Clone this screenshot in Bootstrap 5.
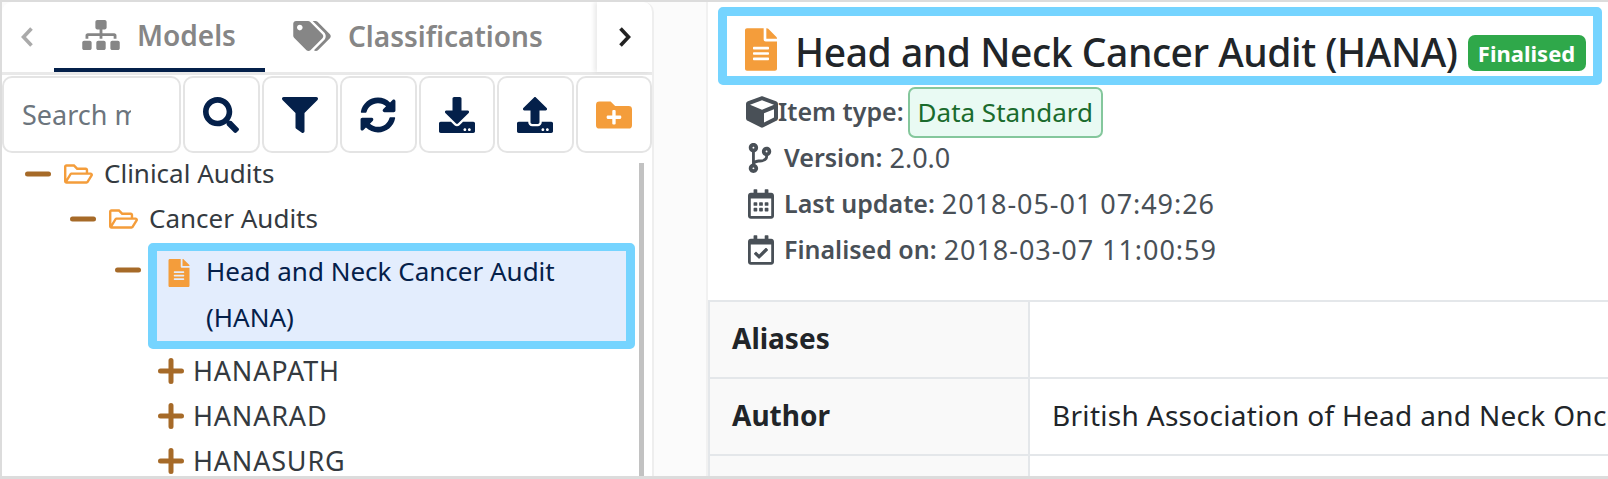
<!DOCTYPE html>
<html lang="en">
  <head>
    <meta charset="UTF-8" />
    <title>Head and Neck Cancer Audit (HANA)</title>
    <link href="https://cdn.jsdelivr.net/npm/bootstrap@5.3.3/dist/css/bootstrap.min.css" rel="stylesheet" />
    <style>
      html, body { height: 479px; margin: 0; overflow: hidden; }
      body { font-family: "Noto Sans", "Lato", sans-serif; background: #fff; }
      .shot { height: 479px; background: #fbfbfb; border: solid #dcdcdc; border-width: 2px 0 3px 2px; overflow: hidden; }
      .ico { fill: currentColor; display: block; flex: none; }

      .side { width: 652px; flex: none; background: #fff; border-right: 2px solid #eee; border-radius: 10px 10px 0 0; }
      .tabbar { height: 70px; border-bottom: 3px solid #e9e9e9; box-sizing: content-box; }
      .tab-prev { width: 52px; color: #aaa; padding-left: 18px; }
      .tab-item { height: 70px; color: #868686; font-size: 28px; font-weight: 600; gap: 17px; padding: 0 28px 2px; }
      .tab-item.on { border-bottom: 4px solid #04204a; width: 211px; padding-bottom: 0; }
      .tab-next { width: 55px; color: #222; box-shadow: -3px 0 4px rgba(0, 0, 0, .08); padding-left: 21px; }
      .tools { height: 77px; margin-top: 1px; gap: 2px; }
      .find { width: 179px; height: 77px; border: 2px solid #e4e4e4; border-radius: 10px; font-size: 27px; color: #6c757d; padding: 0 48px 0 18px; outline: 0; font-family: inherit; }
      .find::placeholder { color: #6c757d; opacity: 1; }
      .tool { flex: 1; height: 77px; border: 2px solid #e4e4e4; border-radius: 10px; color: #04204a; background: #fff; padding: 0; }

      .treebox { margin-top: -2px; min-height: 0; }
      .tree-list { list-style: none; margin: 0; padding: 0 0 0 45px; }
      .tree { padding-left: 23px; font-size: 26px; line-height: 45px; color: #343a40; width: 634px; flex: none; }
      .tree-row { height: 45px; white-space: nowrap; }
      .toggle { color: #a66a28; margin-right: 13px; }
      .toggle-sel { margin-right: 7px; }
      .leaf { padding-left: 43px; font-size: 27px; letter-spacing: .8px; }
      .leaf .toggle { margin-right: 9px; }
      .folder { color: #f49d3b; margin-right: 11px; }
      .picked { margin: 2px 0 -1px 0; width: 487px; height: 106px; flex: none; border: solid #75d4ff; border-width: 8px 9px; border-radius: 5px; background: #e3edfd; color: #04204a; line-height: 46px; padding: 0 0 0 11px; }
      .picked-text { margin: -3px 0 0 5px; white-space: normal; }
      .scroller { width: 5px; background: #c2c2c2; margin: 12px 0 0 3px; flex: none; }

      .main { margin-left: 52px; min-width: 0; background: #fff; border-left: 2px solid #f1f1f1; }
      .head-box { margin: 5px 6px 0 10px; height: 78px; border: solid #75d4ff; border-width: 9px; border-radius: 5px; padding: 12px 16px 0 18px; }
      .head-box h1 { font-size: 39px; letter-spacing: -.45px; font-weight: 500; color: #212529; margin: 0 10px 0 18px; white-space: nowrap; }
      .head-ico { color: #f49d3b; margin-bottom: 5px; }
      .state { background: #2fa84a; font-size: 22px; font-weight: 700; padding: 0; width: 118px; height: 36px; line-height: 36px; border-radius: 7px; flex: none; margin-top: 2px; }
      .facts { padding-left: 38px; margin-top: 1px; font-size: 27px; color: #495057; height: 214px; }
      .fact { height: 46px; white-space: nowrap; }
      .fact-top { height: 52px; margin-bottom: -3px; }
      .fact b { font-size: 25px; font-weight: 600; }
      .fact-ico { width: 38px; padding-left: 2px; }
      .stamp { letter-spacing: .95px; }
      .type-tag { height: 51px; line-height: 47px; padding: 0 8px; margin-left: 4px; background: #e9faf3; border: 2px solid #84c79c; border-radius: 7px; color: #1a6b2d; font-size: 26px; }
      .props { font-size: 28px; color: #212529; border-collapse: collapse; margin: 0; width: 1200px; }
      .props th, .props td { height: 77px; padding: 0 22px 3px; border: 2px solid #e4e7ea; vertical-align: middle; white-space: nowrap; }
      .props td { letter-spacing: .3px; }
      .props th { width: 320px; background: #f9f9f9; font-weight: 700; }
    </style>
  </head>
  <body>
    <svg width="0" height="0" class="position-absolute">
      <symbol id="i-sitemap" viewBox="0 0 640 512"><path d="M128 352H32c-17.67 0-32 14.33-32 32v96c0 17.67 14.33 32 32 32h96c17.67 0 32-14.33 32-32v-96c0-17.67-14.33-32-32-32zm-24-80h192v48h48v-48h192v48h48v-57.59c0-21.17-17.23-38.41-38.41-38.41H344v-64h40c17.67 0 32-14.33 32-32V32c0-17.67-14.33-32-32-32H256c-17.67 0-32 14.33-32 32v96c0 17.67 14.33 32 32 32h40v64H94.41C73.23 224 56 241.23 56 262.41V320h48v-48zm264 80h-96c-17.67 0-32 14.33-32 32v96c0 17.67 14.33 32 32 32h96c17.67 0 32-14.33 32-32v-96c0-17.67-14.33-32-32-32zm240 0h-96c-17.67 0-32 14.33-32 32v96c0 17.67 14.33 32 32 32h96c17.67 0 32-14.33 32-32v-96c0-17.67-14.33-32-32-32z"/></symbol>
      <symbol id="i-tags" viewBox="0 0 640 512"><path d="M497.941 225.941L286.059 14.059A48 48 0 0 0 252.118 0H48C21.49 0 0 21.49 0 48v204.118a48 48 0 0 0 14.059 33.941l211.882 211.882c18.744 18.745 49.136 18.746 67.882 0l204.118-204.118c18.745-18.745 18.745-49.137 0-67.882zM112 160c-26.51 0-48-21.49-48-48s21.49-48 48-48 48 21.49 48 48-21.49 48-48 48zm513.941 133.823L421.823 497.941c-18.745 18.745-49.137 18.745-67.882 0l-.36-.36L527.64 323.522c16.999-16.999 26.36-39.6 26.36-63.64s-9.362-46.641-26.36-63.64L331.397 0h48.721a48 48 0 0 1 33.941 14.059l211.882 211.882c18.745 18.745 18.745 49.137 0 67.882z"/></symbol>
      <symbol id="i-search" viewBox="0 0 512 512"><path d="M505 442.7L405.3 343c-4.5-4.5-10.6-7-17-7H372c27.6-35.3 44-79.7 44-128C416 93.1 322.9 0 208 0S0 93.1 0 208s93.1 208 208 208c48.3 0 92.7-16.4 128-44v16.3c0 6.4 2.5 12.5 7 17l99.7 99.7c9.4 9.4 24.6 9.4 33.9 0l28.3-28.3c9.4-9.4 9.4-24.6.1-34zM208 336c-70.7 0-128-57.2-128-128 0-70.7 57.2-128 128-128 70.7 0 128 57.2 128 128 0 70.7-57.2 128-128 128z"/></symbol>
      <symbol id="i-filter" viewBox="0 0 512 512"><path d="M487.976 0H24.028C2.71 0-8.047 25.866 7.058 40.971L192 225.941V432c0 7.831 3.821 15.17 10.237 19.662l80 55.98C298.02 518.69 320 507.493 320 487.98V225.941l184.947-184.97C520.021 25.896 509.338 0 487.976 0z"/></symbol>
      <symbol id="i-sync" viewBox="0 0 512 512"><path d="M370.72 133.28C339.458 104.008 298.888 87.962 255.848 88c-77.458.068-144.328 53.178-162.791 126.85-1.344 5.363-6.122 9.15-11.651 9.15H24.103c-7.498 0-13.194-6.807-11.807-14.176C33.933 94.924 134.813 8 256 8c66.448 0 126.791 26.136 171.315 68.685L463.03 40.97C478.149 25.851 504 36.559 504 57.941V192c0 13.255-10.745 24-24 24H345.941c-21.382 0-32.09-25.851-16.971-40.971l41.75-41.749zM32 296h134.059c21.382 0 32.09 25.851 16.971 40.971l-41.75 41.75c31.262 29.273 71.835 45.319 114.876 45.28 77.418-.07 144.315-53.144 162.787-126.849 1.344-5.363 6.122-9.15 11.651-9.15h57.304c7.498 0 13.194 6.807 11.807 14.176C478.067 417.076 377.187 504 256 504c-66.448 0-126.791-26.136-171.315-68.685L48.97 471.03C33.851 486.149 8 475.441 8 454.059V320c0-13.255 10.745-24 24-24z"/></symbol>
      <symbol id="i-download" viewBox="0 0 512 512"><path d="M216 0h80c13.3 0 24 10.7 24 24v168h87.7c17.8 0 26.7 21.5 14.1 34.1L269.7 378.3c-7.5 7.5-19.8 7.5-27.3 0L90.1 226.1c-12.6-12.6-3.7-34.1 14.1-34.1H192V24c0-13.3 10.7-24 24-24zm296 376v112c0 13.3-10.7 24-24 24H24c-13.3 0-24-10.7-24-24V376c0-13.3 10.7-24 24-24h146.7l49 49c20.1 20.1 52.5 20.1 72.6 0l49-49H488c13.3 0 24 10.7 24 24zm-124 88c0-11-9-20-20-20s-20 9-20 20 9 20 20 20 20-9 20-20zm64 0c0-11-9-20-20-20s-20 9-20 20 9 20 20 20 20-9 20-20z"/></symbol>
      <symbol id="i-upload" viewBox="0 0 512 512"><path d="M296 384h-80c-13.3 0-24-10.7-24-24V192h-87.7c-17.8 0-26.7-21.5-14.1-34.1L242.3 5.7c7.5-7.5 19.8-7.5 27.3 0l152.2 152.2c12.6 12.6 3.7 34.1-14.1 34.1H320v168c0 13.3-10.7 24-24 24zm216-8v112c0 13.3-10.7 24-24 24H24c-13.3 0-24-10.7-24-24V376c0-13.3 10.7-24 24-24h136v8c0 30.9 25.1 56 56 56h80c30.9 0 56-25.1 56-56v-8h136c13.3 0 24 10.7 24 24zm-124 88c0-11-9-20-20-20s-20 9-20 20 9 20 20 20 20-9 20-20zm64 0c0-11-9-20-20-20s-20 9-20 20 9 20 20 20 20-9 20-20z"/></symbol>
      <symbol id="i-folder-plus" viewBox="0 0 512 512"><path d="M464,128H272L208,64H48A48,48,0,0,0,0,112V400a48,48,0,0,0,48,48H464a48,48,0,0,0,48-48V176A48,48,0,0,0,464,128ZM359.5,296a16,16,0,0,1-16,16h-64v64a16,16,0,0,1-16,16h-16a16,16,0,0,1-16-16V312h-64a16,16,0,0,1-16-16V280a16,16,0,0,1,16-16h64V200a16,16,0,0,1,16-16h16a16,16,0,0,1,16,16v64h64a16,16,0,0,1,16,16Z"/></symbol>
      <symbol id="i-folder-open" viewBox="0 0 576 512"><path d="M527.9 224H480v-48c0-26.5-21.5-48-48-48H272l-64-64H48C21.5 64 0 85.5 0 112v288c0 26.5 21.5 48 48 48h400c16.5 0 31.9-8.5 40.7-22.6l79.9-128c20-31.9-3-73.4-40.7-73.4zM48 118c0-3.3 2.7-6 6-6h134.1l64 64H426c3.3 0 6 2.7 6 6v42H152c-16.8 0-32.4 8.8-41.1 23.2L48 351.4zm400 282H72l77.2-128H528z"/></symbol>
      <symbol id="i-file" viewBox="0 0 384 512"><path d="M224 136V0H24C10.7 0 0 10.7 0 24v464c0 13.3 10.7 24 24 24h336c13.3 0 24-10.7 24-24V160H248c-13.2 0-24-10.8-24-24zm64 236c0 6.6-5.4 12-12 12H108c-6.6 0-12-5.4-12-12v-8c0-6.6 5.4-12 12-12h168c6.6 0 12 5.4 12 12v8zm0-64c0 6.6-5.4 12-12 12H108c-6.6 0-12-5.4-12-12v-8c0-6.6 5.4-12 12-12h168c6.6 0 12 5.4 12 12v8zm0-72v8c0 6.6-5.4 12-12 12H108c-6.6 0-12-5.4-12-12v-8c0-6.6 5.4-12 12-12h168c6.6 0 12 5.4 12 12zm96-114.1v6.1H256V0h6.1c6.4 0 12.5 2.5 17 7l97.9 98c4.5 4.5 7 10.6 7 16.9z"/></symbol>
      <symbol id="i-cube" viewBox="0 0 512 512"><path d="M239.1 6.3l-208 78c-18.7 7-31.1 25-31.1 45v225.1c0 18.2 10.3 34.8 26.5 42.9l208 104c13.5 6.8 29.4 6.8 42.9 0l208-104c16.3-8.1 26.5-24.8 26.5-42.9V129.3c0-20-12.4-37.9-31.1-44.9l-208-78C262 2.2 250 2.2 239.1 6.3zM256 68.4l192 72v1.1l-192 78-192-78v-1.1l192-72zm32 356V275.5l160-65v133.9l-160 80z"/></symbol>
      <symbol id="i-branch" viewBox="0 0 384 512"><path d="M384 144c0-44.2-35.8-80-80-80s-80 35.8-80 80c0 36.4 24.3 67.1 57.5 76.8-.6 16.1-4.2 28.5-11 36.9-15.4 19.2-49.3 22.4-85.2 25.7-28.2 2.6-57.4 5.4-81.3 16.9v-144c32.5-10.2 56-40.5 56-76.3 0-44.2-35.8-80-80-80S0 35.8 0 80c0 35.8 23.5 66.1 56 76.3v199.3C23.5 365.9 0 396.2 0 432c0 44.2 35.8 80 80 80s80-35.8 80-80c0-34-21.2-63.1-51.2-74.6 3.1-5.2 7.8-9.8 14.9-13.4 16.2-8.2 40.4-10.4 66.1-12.8 42.2-3.9 90-8.4 118.2-43.4 14-17.4 21.1-39.8 21.6-67.9 31.6-10.8 54.4-40.7 54.4-75.9zM80 64c8.8 0 16 7.2 16 16s-7.2 16-16 16-16-7.2-16-16 7.2-16 16-16zm0 384c-8.8 0-16-7.2-16-16s7.2-16 16-16 16 7.2 16 16-7.2 16-16 16zm224-320c8.8 0 16 7.2 16 16s-7.2 16-16 16-16-7.2-16-16 7.2-16 16-16z"/></symbol>
      <symbol id="i-calendar" viewBox="0 0 448 512"><path d="M148 288h-40c-6.6 0-12-5.4-12-12v-40c0-6.6 5.4-12 12-12h40c6.6 0 12 5.4 12 12v40c0 6.6-5.4 12-12 12zm108-12v-40c0-6.6-5.4-12-12-12h-40c-6.6 0-12 5.4-12 12v40c0 6.6 5.4 12 12 12h40c6.6 0 12-5.4 12-12zm96 0v-40c0-6.6-5.4-12-12-12h-40c-6.6 0-12 5.4-12 12v40c0 6.6 5.4 12 12 12h40c6.6 0 12-5.4 12-12zm-96 96v-40c0-6.6-5.4-12-12-12h-40c-6.6 0-12 5.4-12 12v40c0 6.6 5.4 12 12 12h40c6.6 0 12-5.4 12-12zm-96 0v-40c0-6.6-5.4-12-12-12h-40c-6.6 0-12 5.4-12 12v40c0 6.6 5.4 12 12 12h40c6.6 0 12-5.4 12-12zm192 0v-40c0-6.6-5.4-12-12-12h-40c-6.6 0-12 5.4-12 12v40c0 6.6 5.4 12 12 12h40c6.6 0 12-5.4 12-12zm96-260v352c0 26.5-21.5 48-48 48H48c-26.5 0-48-21.5-48-48V112c0-26.5 21.5-48 48-48h48V12c0-6.6 5.4-12 12-12h40c6.6 0 12 5.4 12 12v52h128V12c0-6.6 5.4-12 12-12h40c6.6 0 12 5.4 12 12v52h48c26.5 0 48 21.5 48 48zm-48 346V160H48v298c0 3.3 2.7 6 6 6h340c3.3 0 6-2.7 6-6z"/></symbol>
      <symbol id="i-calcheck" viewBox="0 0 448 512"><path d="M400 64h-48V12c0-6.627-5.373-12-12-12h-40c-6.627 0-12 5.373-12 12v52H160V12c0-6.627-5.373-12-12-12h-40c-6.627 0-12 5.373-12 12v52H48C21.49 64 0 85.49 0 112v352c0 26.51 21.49 48 48 48h352c26.51 0 48-21.49 48-48V112c0-26.51-21.49-48-48-48zm-6 400H54a6 6 0 0 1-6-6V160h352v298a6 6 0 0 1-6 6zm-52.849-200.65L198.842 404.519c-4.705 4.667-12.303 4.637-16.971-.068l-75.091-75.699c-4.667-4.705-4.637-12.303.068-16.971l22.719-22.536c4.705-4.667 12.303-4.637 16.97.069l44.104 44.461 111.072-110.181c4.705-4.667 12.303-4.637 16.971.068l22.536 22.718c4.667 4.705 4.636 12.303-.069 16.97z"/></symbol>
      <symbol id="i-minus" viewBox="0 0 26 26"><path d="M2.5 13h21" stroke="currentColor" stroke-width="5" stroke-linecap="round" fill="none"/></symbol>
      <symbol id="i-plus" viewBox="0 0 26 26"><path d="M2.5 13h21M13 2.5v21" stroke="currentColor" stroke-width="5" stroke-linecap="round" fill="none"/></symbol>
      <symbol id="i-prev" viewBox="0 0 14 20"><path d="M11.5 1.5 3.5 10l8 8.5" stroke="currentColor" stroke-width="3.6" fill="none"/></symbol>
      <symbol id="i-next" viewBox="0 0 14 20"><path d="m2.5 1.5 8 8.5-8 8.5" stroke="currentColor" stroke-width="3.6" fill="none"/></symbol>
    </svg>

    <div class="shot d-flex">
      <div class="side d-flex flex-column">
        <div class="tabbar d-flex align-items-center">
          <div class="tab-prev"><svg class="ico" width="14" height="20"><use href="#i-prev"/></svg></div>
          <div class="tab-item on d-flex align-items-center"><svg class="ico" width="38" height="30"><use href="#i-sitemap"/></svg>Models</div>
          <div class="tab-item d-flex align-items-center flex-grow-1"><svg class="ico" width="38" height="30"><use href="#i-tags"/></svg>Classifications</div>
          <div class="tab-next h-100 d-flex align-items-center"><svg class="ico" width="14" height="20"><use href="#i-next"/></svg></div>
        </div>
        <div class="tools d-flex">
          <input class="find" type="text" placeholder="Search models" />
          <button class="tool d-flex align-items-center justify-content-center"><svg class="ico" width="36" height="36"><use href="#i-search"/></svg></button>
          <button class="tool d-flex align-items-center justify-content-center"><svg class="ico" width="36" height="36"><use href="#i-filter"/></svg></button>
          <button class="tool d-flex align-items-center justify-content-center"><svg class="ico" width="36" height="36"><use href="#i-sync"/></svg></button>
          <button class="tool d-flex align-items-center justify-content-center"><svg class="ico" width="36" height="36"><use href="#i-download"/></svg></button>
          <button class="tool d-flex align-items-center justify-content-center"><svg class="ico" width="36" height="36"><use href="#i-upload"/></svg></button>
          <button class="tool d-flex align-items-center justify-content-center"><svg class="ico" width="36" height="36" style="color:#f49d3b"><use href="#i-folder-plus"/></svg></button>
        </div>
        <div class="treebox d-flex flex-grow-1 overflow-hidden">
          <div class="tree">
            <div class="tree-row d-flex align-items-center"><svg class="ico toggle" width="26" height="26"><use href="#i-minus"/></svg><svg class="ico folder" width="29" height="26"><use href="#i-folder-open"/></svg>Clinical Audits</div>
            <div class="tree-list">
              <div class="tree-row d-flex align-items-center"><svg class="ico toggle" width="26" height="26"><use href="#i-minus"/></svg><svg class="ico folder" width="29" height="26"><use href="#i-folder-open"/></svg>Cancer Audits</div>
              <div class="tree-list">
                <div class="d-flex">
                  <svg class="ico toggle toggle-sel mt-3" width="26" height="26"><use href="#i-minus"/></svg>
                  <div class="picked d-flex">
                    <svg class="ico folder mt-2" width="22" height="28"><use href="#i-file"/></svg>
                    <div class="picked-text">Head and Neck Cancer Audit (HANA)</div>
                  </div>
                </div>
                <div class="leaf tree-list">
                  <div class="tree-row d-flex align-items-center"><svg class="ico toggle" width="26" height="26"><use href="#i-plus"/></svg>HANAPATH</div>
                  <div class="tree-row d-flex align-items-center"><svg class="ico toggle" width="26" height="26"><use href="#i-plus"/></svg>HANARAD</div>
                  <div class="tree-row d-flex align-items-center"><svg class="ico toggle" width="26" height="26"><use href="#i-plus"/></svg>HANASURG</div>
                </div>
              </div>
            </div>
          </div>
          <div class="scroller"></div>
        </div>
      </div>

      <div class="main flex-grow-1">
        <div class="head-box d-flex align-items-center">
          <svg class="ico head-ico" width="32" height="43"><use href="#i-file"/></svg>
          <h1>Head and Neck Cancer Audit (HANA)</h1>
          <span class="state badge">Finalised</span>
        </div>
        <div class="facts">
          <div class="fact fact-top d-flex align-items-center"><svg class="ico" width="32" height="34"><use href="#i-cube"/></svg><b>Item type:</b><span class="type-tag">Data Standard</span></div>
          <div class="fact d-flex align-items-center"><span class="fact-ico"><svg class="ico" width="24" height="30"><use href="#i-branch"/></svg></span><b>Version:</b>&nbsp;2.0.0</div>
          <div class="fact d-flex align-items-center"><span class="fact-ico"><svg class="ico" width="26" height="30"><use href="#i-calendar"/></svg></span><b>Last update:</b>&nbsp;<span class="stamp">2018-05-01 07:49:26</span></div>
          <div class="fact d-flex align-items-center"><span class="fact-ico"><svg class="ico" width="26" height="30"><use href="#i-calcheck"/></svg></span><b>Finalised on:</b>&nbsp;<span class="stamp">2018-03-07 11:00:59</span></div>
        </div>
        <table class="props">
          <tr><th>Aliases</th><td></td></tr>
          <tr><th>Author</th><td>British Association of Head and Neck Oncologists</td></tr>
          <tr><th></th><td></td></tr>
        </table>
      </div>
    </div>
    <script src="https://cdn.jsdelivr.net/npm/bootstrap@5.3.3/dist/js/bootstrap.bundle.min.js"></script>
  </body>
</html>
